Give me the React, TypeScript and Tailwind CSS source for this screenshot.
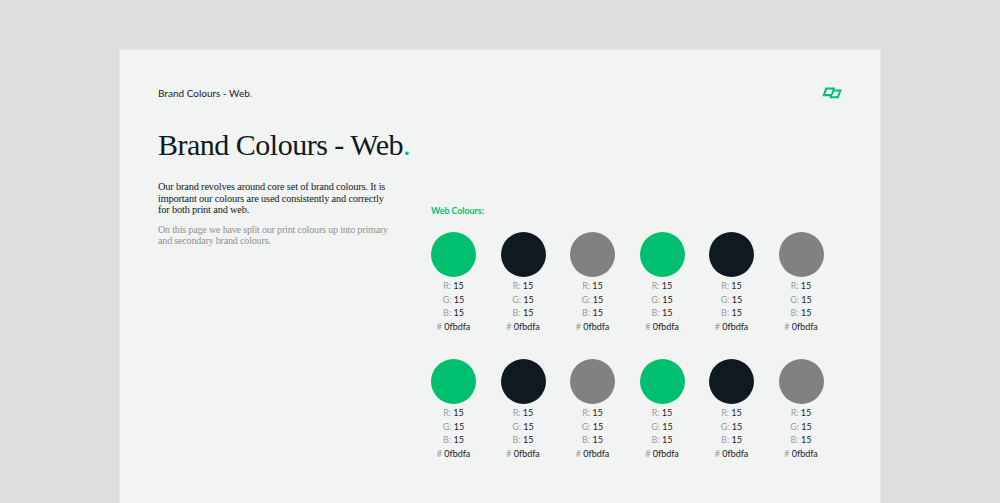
const serif = "font-['Liberation_Serif',serif]";
const sans = "font-['Lato',sans-serif]";

const swatches = ["bg-[#00bf6f]", "bg-[#0f1a20]", "bg-[#808180]", "bg-[#00bf6f]", "bg-[#0f1a20]", "bg-[#808180]"];

const Logo = () => (
  <svg width="20" height="12" viewBox="0 0 20 12" fill="#00bf6f" fillRule="evenodd">
    <path d="M3.5 .5H13L12.6 2.5H19.8L16.5 11.2H7.5L8 9.2H.4ZM5.2 2.4H10.6L10 4.5 9.2 7H3.2ZM12 4.6H17L15.2 9.2H9.9L10.6 7.4H11Z" />
  </svg>
);

const Swatch = ({ color }: { color: string }) => (
  <div className="flex flex-col items-center w-[45px]">
    <div className={`w-[45px] h-[45px] rounded-full ${color}`} />
    <div className={`mt-[2px] flex flex-col items-center text-[9px] leading-[13.5px] whitespace-nowrap text-[#1a2328] ${sans}`}>
      <p><span className="text-[#9a9c9c]">R:</span> 15</p>
      <p><span className="text-[#9a9c9c]">G:</span> 15</p>
      <p><span className="text-[#9a9c9c]">B:</span> 15</p>
      <p><span className="text-[#9a9c9c]">#</span> 0fbdfa</p>
    </div>
  </div>
);

export default function App() {
  return (
    <div className="h-[503px] overflow-hidden bg-[#dedede] pt-[50px] pl-[120px]">
      <div className="w-[760px] h-[453px] bg-[#f2f4f3] px-[38px] pt-[37px] shadow-[0_0_0_1px_#e8e9e9]">
        <header className="flex items-center justify-between h-[12px]">
          <p className={`text-[10px] text-[#1a2328] ${sans}`}>
            Brand Colours - Web<span className="text-[#00bf6f]">.</span>
          </p>
          <Logo />
        </header>
        <h1 className={`mt-[26px] text-[30px] leading-[40px] tracking-[-0.5px] text-[#0f1a20] ${serif}`}>
          Brand Colours - Web<span className="text-[#00bf6f]">.</span>
        </h1>
        <div className="flex mt-[16px]">
          <div className={`w-[273px] shrink-0 pr-[41px] ${serif}`}>
            <p className="text-[10.3px] leading-[11.7px] tracking-[-0.15px] text-[#0f1a20]">
              Our brand revolves around core set of brand colours. It is important our colours are used consistently and correctly for both print and web.
            </p>
            <p className="mt-[8px] text-[10.1px] leading-[11px] tracking-[-0.2px] text-[#8f9292]">
              On this page we have split our print colours up into primary and secondary brand colours.
            </p>
          </div>
          <div className="pt-[24px]">
            <h2 className={`text-[8.8px] leading-[12px] font-bold text-[#00bf6f] ${sans}`}>Web Colours:</h2>
            <div className="mt-[15px] grid grid-cols-6 gap-x-[24.5px] gap-y-[26px]">
              {[...swatches, ...swatches].map((color, i) => (
                <Swatch key={i} color={color} />
              ))}
            </div>
          </div>
        </div>
      </div>
    </div>
  );
}
